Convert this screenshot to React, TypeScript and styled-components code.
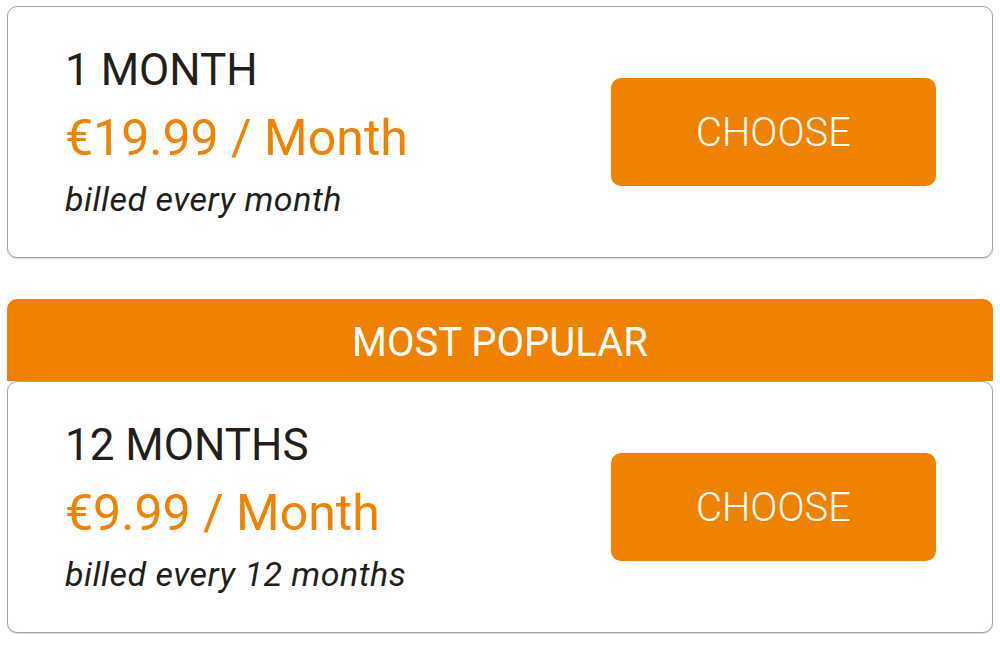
import React from 'react';
import styled, { createGlobalStyle } from 'styled-components';

const orange = '#ef8200';

const GlobalStyle = createGlobalStyle`
  body {
    margin: 0;
    background: #fff;
    font-family: Roboto, "Liberation Sans", sans-serif;
  }
`;

const Page = styled.div`
  display: flex;
  flex-direction: column;
  padding: 6px 7px;
`;

const Card = styled.div`
  display: flex;
  align-items: center;
  justify-content: space-between;
  height: 252px;
  box-sizing: border-box;
  padding: 0 56px 0 57px;
  border: 1px solid #a3a3a3;
  border-radius: 10px;
  box-shadow: 0 1px 1px rgba(0, 0, 0, 0.15);
  background: #fff;
`;

const Info = styled.div`
  display: flex;
  flex-direction: column;
`;

const Title = styled.div`
  font-size: 44px;
  line-height: 50px;
  color: #221f1b;
`;

const Price = styled.div`
  font-size: 50px;
  line-height: 56px;
  margin-top: 15px;
  color: ${orange};
`;

const Billing = styled.div`
  font-size: 34px;
  line-height: 40px;
  margin-top: 13px;
  font-style: italic;
  letter-spacing: 0.5px;
  color: #221f1b;
`;

const ChooseButton = styled.button`
  width: 325px;
  height: 108px;
  border: none;
  border-radius: 10px;
  background: ${orange};
  color: #fff;
  font-family: inherit;
  font-size: 40px;
  font-weight: 300;
  cursor: pointer;
`;

const Popular = styled.div`
  display: flex;
  flex-direction: column;
  margin-top: 41px;
`;

const Banner = styled.div`
  height: 82px;
  display: flex;
  align-items: center;
  justify-content: center;
  background: ${orange};
  border-radius: 10px 10px 0 0;
  color: #fff;
  font-size: 40px;
  padding-top: 4px;
  box-sizing: border-box;
`;

type Plan = { title: string; price: string; billing: string };

const plans: Plan[] = [
  { title: '1 MONTH', price: '€19.99 / Month', billing: 'billed every month' },
  { title: '12 MONTHS', price: '€9.99 / Month', billing: 'billed every 12 months' }
];

const PlanCard: React.FC<{ plan: Plan }> = ({ plan }) => (
  <Card>
    <Info>
      <Title>{plan.title}</Title>
      <Price>{plan.price}</Price>
      <Billing>{plan.billing}</Billing>
    </Info>
    <ChooseButton>CHOOSE</ChooseButton>
  </Card>
);

const App: React.FC = () => (
  <>
    <GlobalStyle />
    <Page>
      <PlanCard plan={plans[0]} />
      <Popular>
        <Banner>MOST POPULAR</Banner>
        <PlanCard plan={plans[1]} />
      </Popular>
    </Page>
  </>
);

export default App;
